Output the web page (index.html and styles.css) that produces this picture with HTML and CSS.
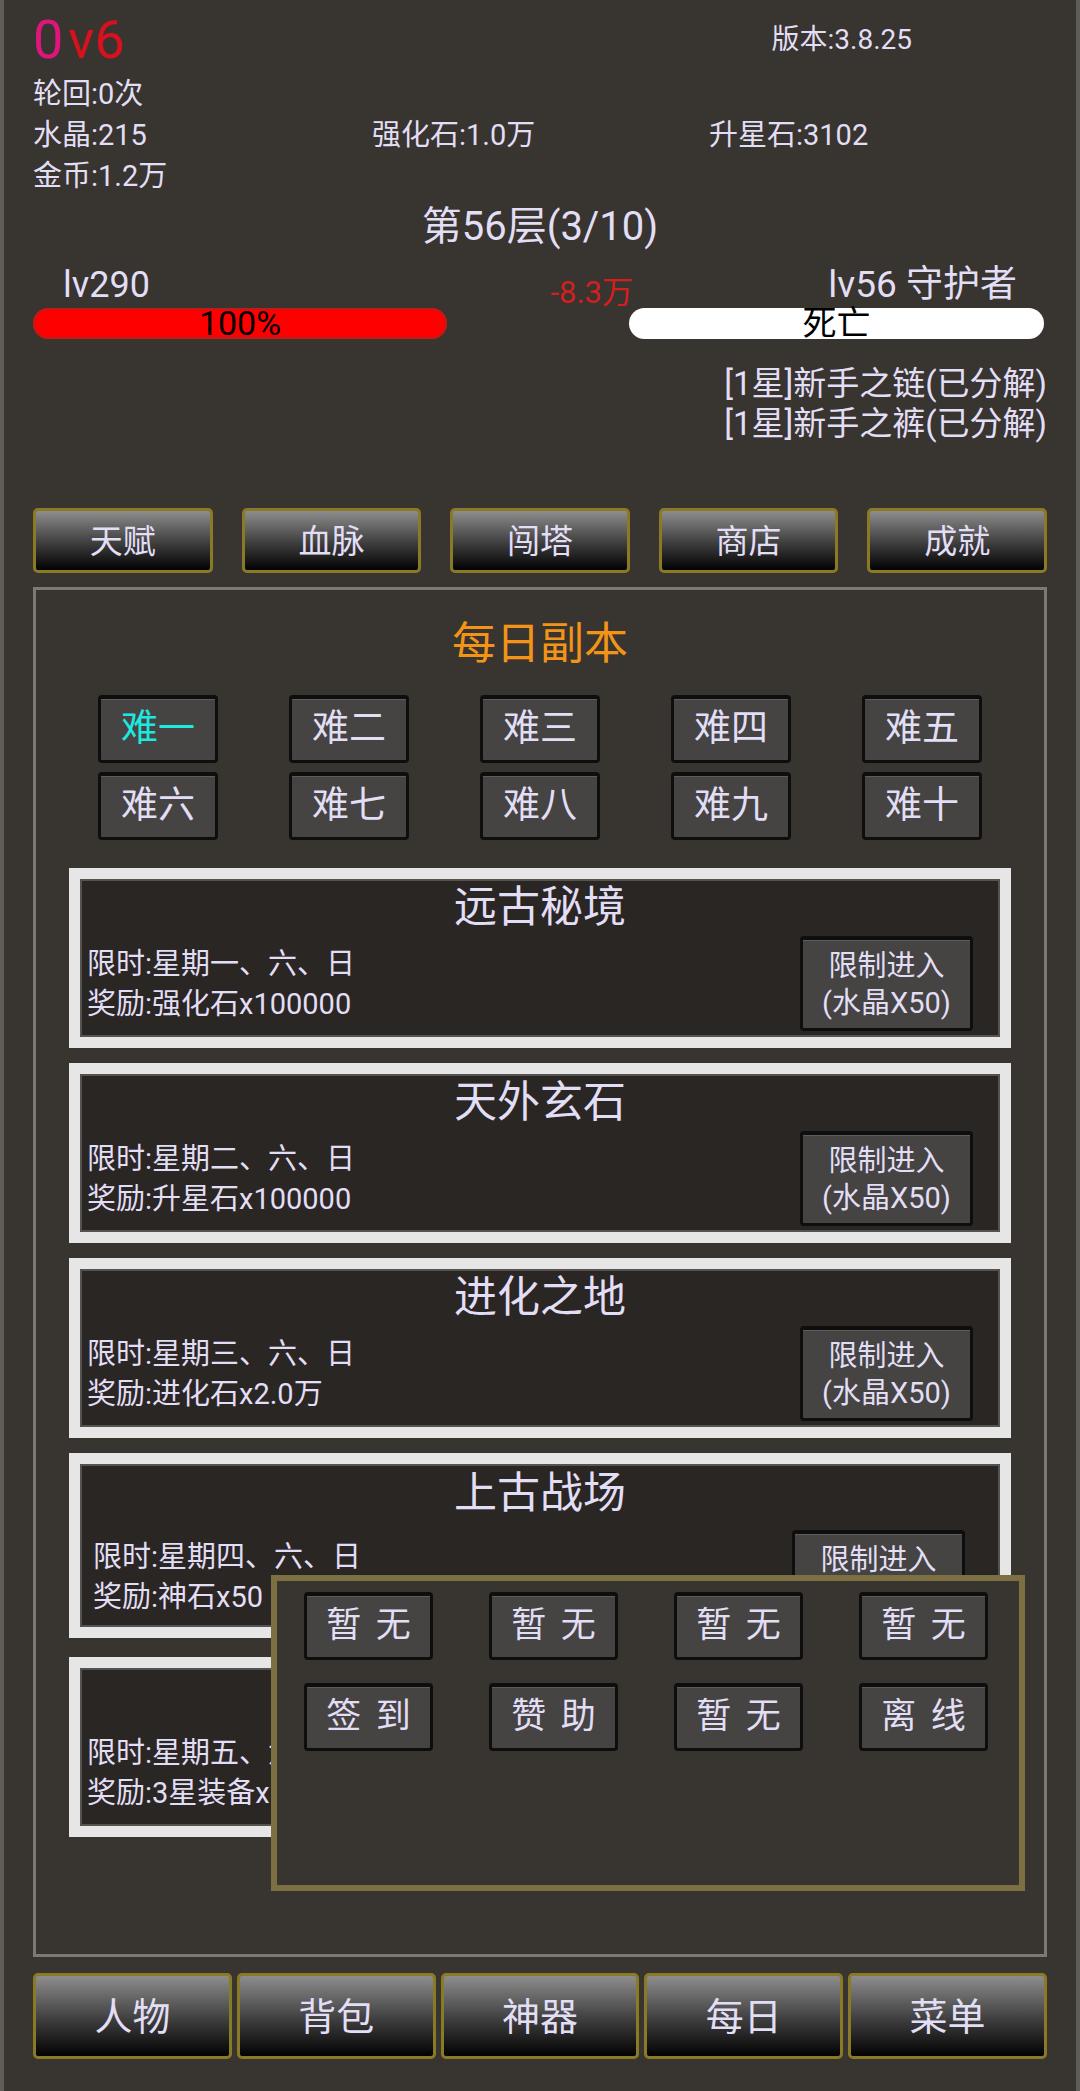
FILE: index.html
```html
<!DOCTYPE html>
<html lang="zh">
<head>
  <meta charset="UTF-8" />
  <meta name="viewport" content="width=device-width, initial-scale=1.0">
  <title>每日副本</title>
  <link rel="stylesheet" href="styles.css">
</head>
<body>
  <div class="game">
    <div class="head">
      <div class="vip"><span class="zero">0</span><span class="v">v6</span></div>
      <div class="ver">版本:3.8.25</div>
    </div>

    <div class="stats">
      <div>轮回:0次</div>
      <div class="stats-row">
        <span>水晶:215</span>
        <span>强化石:1.0万</span>
        <span>升星石:3102</span>
      </div>
      <div>金币:1.2万</div>
    </div>

    <div class="floor">第56层(3/10)</div>

    <div class="fight">
      <div class="fighter">
        <div class="name">lv290</div>
        <div class="bar bar-hp">100%</div>
      </div>
      <div class="mid"><span class="dmg">-8.3万</span></div>
      <div class="fighter fighter-r">
        <div class="name">lv56 守护者</div>
        <div class="bar bar-dead">死亡</div>
      </div>
    </div>

    <div class="drops">
      <div>[1星]新手之链(已分解)</div>
      <div>[1星]新手之裤(已分解)</div>
    </div>

    <div class="tabs">
      <div class="tab">天赋</div>
      <div class="tab">血脉</div>
      <div class="tab">闯塔</div>
      <div class="tab">商店</div>
      <div class="tab">成就</div>
    </div>

    <div class="panel">
      <div class="panel-title">每日副本</div>

      <div class="levels">
        <div class="lv lv-on">难一</div>
        <div class="lv">难二</div>
        <div class="lv">难三</div>
        <div class="lv">难四</div>
        <div class="lv">难五</div>
        <div class="lv">难六</div>
        <div class="lv">难七</div>
        <div class="lv">难八</div>
        <div class="lv">难九</div>
        <div class="lv">难十</div>
      </div>

      <div class="cards">
        <div class="card">
          <div class="card-title">远古秘境</div>
          <div class="card-body">
            <div class="card-text">
              <div>限时:星期一、六、日</div>
              <div>奖励:强化石x100000</div>
            </div>
            <div class="enter">限制进入<br>(水晶X50)</div>
          </div>
        </div>
        <div class="card">
          <div class="card-title">天外玄石</div>
          <div class="card-body">
            <div class="card-text">
              <div>限时:星期二、六、日</div>
              <div>奖励:升星石x100000</div>
            </div>
            <div class="enter">限制进入<br>(水晶X50)</div>
          </div>
        </div>
        <div class="card">
          <div class="card-title">进化之地</div>
          <div class="card-body">
            <div class="card-text">
              <div>限时:星期三、六、日</div>
              <div>奖励:进化石x2.0万</div>
            </div>
            <div class="enter">限制进入<br>(水晶X50)</div>
          </div>
        </div>
        <div class="card card-shift">
          <div class="card-title">上古战场</div>
          <div class="card-body">
            <div class="card-text">
              <div>限时:星期四、六、日</div>
              <div>奖励:神石x50</div>
            </div>
            <div class="enter">限制进入<br>(水晶X50)</div>
          </div>
        </div>
        <div class="card">
          <div class="card-title">神魔遗迹</div>
          <div class="card-body">
            <div class="card-text">
              <div>限时:星期五、六、日</div>
              <div>奖励:3星装备x1</div>
            </div>
            <div class="enter">限制进入<br>(水晶X50)</div>
          </div>
        </div>
      </div>
    </div>

    <div class="bottom">
      <div class="tab">人物</div>
      <div class="tab">背包</div>
      <div class="tab">神器</div>
      <div class="tab">每日</div>
      <div class="tab">菜单</div>
    </div>
  </div>

  <div class="popup">
    <div class="pop-btn">暂 无</div>
    <div class="pop-btn">暂 无</div>
    <div class="pop-btn">暂 无</div>
    <div class="pop-btn">暂 无</div>
    <div class="pop-btn">签 到</div>
    <div class="pop-btn">赞 助</div>
    <div class="pop-btn">暂 无</div>
    <div class="pop-btn">离 线</div>
  </div>
</body>
</html>
```

FILE: styles.css
```css
* {
  box-sizing: border-box;
}

html, body {
  margin: 0;
  padding: 0;
}

body {
  position: relative;
  width: 1080px;
  height: 2091px;
  overflow: hidden;
  background: #38342f;
  border-left: 4px solid #5e5d58;
  border-right: 4px solid #5e5d58;
  color: #e2def5;
  font-family: Roboto, "Noto Sans CJK SC", sans-serif;
}

.game {
  padding: 8px 29px 0;
}

/* top info */
.head {
  display: flex;
  align-items: center;
  height: 64px;
}

.vip {
  font-size: 54px;
  line-height: 64px;
}

.vip .zero {
  color: #e0157c;
  margin-right: 5px;
}

.vip .v {
  color: #d8111e;
}

.ver {
  margin-left: auto;
  margin-right: 135px;
  margin-top: -6px;
  font-size: 28px;
}

.stats {
  font-size: 29px;
  line-height: 41px;
  padding-top: 2px;
}

.stats-row {
  display: grid;
  grid-template-columns: 339px 337px 1fr;
}

.floor {
  margin-top: 5px;
  text-align: center;
  font-size: 40px;
  line-height: 50px;
}

/* fighters */
.fight {
  display: flex;
  margin-top: 11px;
}

.fighter {
  width: 414px;
}

.fighter-r {
  width: 418px;
  padding-right: 3px;
}

.name {
  font-size: 36px;
  line-height: 40px;
  padding-left: 30px;
  padding-top: 2px;
}

.fighter-r .name {
  text-align: right;
  padding-left: 0;
  padding-right: 27px;
  font-size: 37px;
}

.mid {
  flex: 1;
  text-align: right;
  padding-top: 10px;
  margin-right: -4px;
}

.dmg {
  color: #d21f1f;
  font-size: 31px;
  line-height: 40px;
}

.bar {
  margin-top: 3px;
  height: 31px;
  border-radius: 16px;
  color: #000;
  text-align: center;
  font-size: 34px;
  line-height: 31px;
}

.bar-hp {
  background: #ff0000;
  box-shadow: inset 0 0 0 2px #c21a1a;
}

.bar-dead {
  background: #fff;
}

.drops {
  margin-top: 25px;
  text-align: right;
  font-size: 33px;
  line-height: 40px;
}

/* tab buttons */
.tabs {
  display: flex;
  gap: 29px;
  margin-top: 64px;
}

.tab {
  flex: 1;
  height: 65px;
  border: 3px solid #8a7a26;
  border-radius: 5px;
  background: linear-gradient(#8d8d8d, #3d3d3d 55%, #020202);
  text-align: center;
  font-size: 33px;
  line-height: 61px;
}

/* daily panel */
.panel {
  margin-top: 14px;
  height: 1370px;
  border: 3px solid #7a7973;
}

.panel-title {
  padding-top: 26px;
  text-align: center;
  color: #f39419;
  font-size: 44px;
  line-height: 56px;
}

.levels {
  display: grid;
  grid-template-columns: repeat(5, 191px);
  justify-content: center;
  justify-items: center;
  row-gap: 9px;
  margin-top: 23px;
}

.lv {
  width: 120px;
  height: 68px;
  background: #454443;
  border: 3px solid #0e0e0e;
  border-top-width: 4px;
  border-radius: 4px;
  box-shadow: inset 0 1px 0 #5d5c5a;
  text-align: center;
  font-size: 37px;
  line-height: 60px;
}

.lv-on {
  color: #1de9e0;
}

.cards {
  display: flex;
  flex-direction: column;
  gap: 15px;
  margin: 28px 33px 0;
}

.card {
  height: 180px;
  border: 11px solid #e6e6e6;
  background: #2a2623;
  box-shadow: inset 0 0 0 2px #55524f;
}

.card-title {
  padding-top: 3px;
  text-align: center;
  font-size: 43px;
  line-height: 50px;
}

.card-body {
  display: flex;
  align-items: flex-start;
}

.card-text {
  margin-top: 12px;
  padding-left: 7px;
  font-size: 29px;
  line-height: 40px;
}

.enter {
  margin: 4px 27px 0 auto;
  width: 173px;
  height: 95px;
  padding-top: 8px;
  background: #454443;
  border: 3px solid #0e0e0e;
  border-top-width: 4px;
  border-radius: 4px;
  box-shadow: inset 0 1px 0 #5d5c5a;
  text-align: center;
  font-size: 29px;
  line-height: 37px;
}

.card-shift {
  height: 185px;
  margin-bottom: 4px;
}

.card-shift .card-title {
  padding-top: 4px;
}

.card-shift .card-text {
  margin-top: 19px;
  padding-left: 13px;
}

.card-shift .enter {
  margin-top: 12px;
  margin-right: 35px;
}

/* bottom menu */
.bottom {
  display: flex;
  gap: 5px;
  margin-top: 16px;
}

.bottom .tab {
  height: 86px;
  font-size: 38px;
  line-height: 82px;
}

/* quick menu popup */
.popup {
  position: absolute;
  left: 267px;
  top: 1575px;
  width: 754px;
  height: 316px;
  padding: 11px 0 0 27px;
  background: #38342f;
  border: 6px solid #7c7043;
  display: grid;
  grid-template-columns: repeat(4, 129px);
  grid-auto-rows: 68px;
  column-gap: 56px;
  row-gap: 23px;
  align-content: start;
}

.pop-btn {
  background: #454443;
  border: 3px solid #0e0e0e;
  border-top-width: 4px;
  border-radius: 4px;
  box-shadow: inset 0 1px 0 #5d5c5a;
  text-align: center;
  font-size: 35px;
  line-height: 60px;
  word-spacing: 6px;
}
```
